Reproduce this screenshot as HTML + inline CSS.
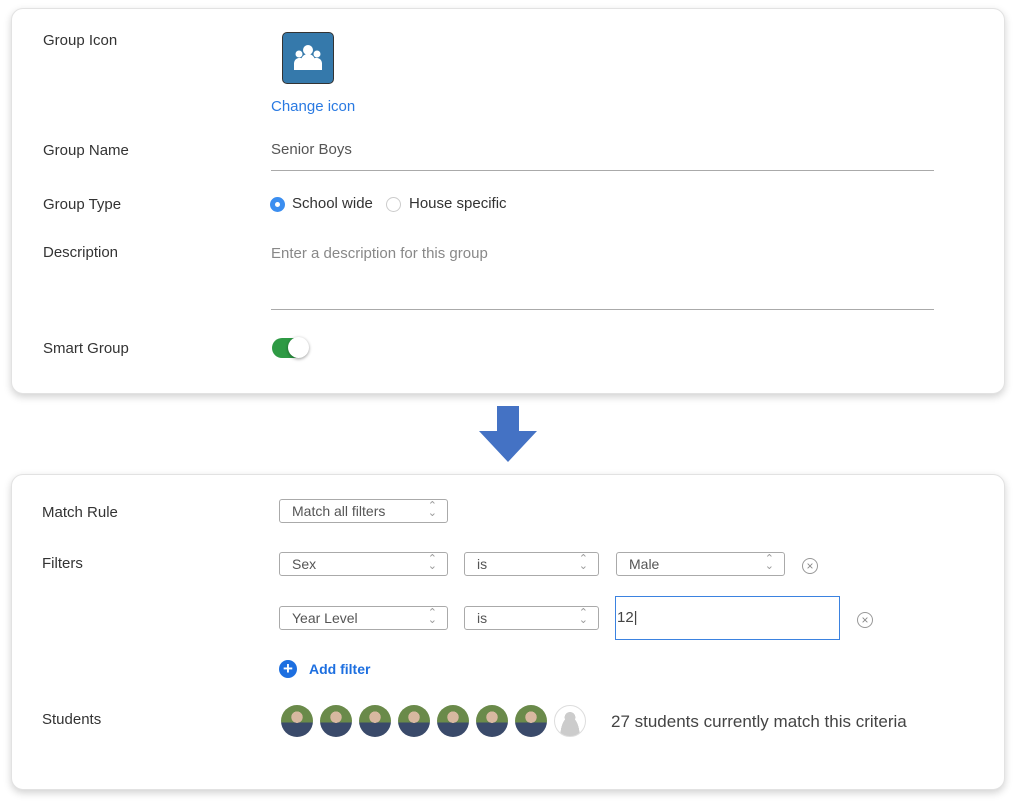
<!DOCTYPE html>
<html><head><style>
body{margin:0;width:1024px;height:812px;background:#fff;font-family:"Liberation Sans",sans-serif;position:relative;overflow:hidden;color:#333}
.card{position:absolute;left:11px;width:992px;background:#fff;border:1px solid #e2e2e2;border-radius:12px;box-shadow:0 3px 8px rgba(0,0,0,.18)}
.a{position:absolute;white-space:nowrap}
.lbl{font-size:15px;color:#333}
.sel{position:absolute;height:24px;border:1px solid #aaa;border-radius:3px;font-size:14px;color:#555;box-sizing:border-box;padding:3px 12px;background:#fff}
.sel:after{content:"⌃";position:absolute;right:10px;top:0;font-size:11px;color:#999;line-height:12px}
.sel:before{content:"⌄";position:absolute;right:10px;top:7px;font-size:11px;color:#999;line-height:12px}
.x{position:absolute;width:14px;height:14px;border:1.5px solid #999;border-radius:50%;font-size:12px;line-height:14px;text-align:center;color:#888}
.av{position:absolute;top:705px;width:32px;height:32px;border-radius:50%;background:radial-gradient(circle at 50% 38%,#d8b8a0 0 22%,transparent 23%),linear-gradient(#6a8a4a 0 55%,#3a4a6a 55%)}
</style></head><body>
<div class="card" style="top:8px;height:384px"></div>
<div class="card" style="top:474px;height:314px"></div>

<div class="a lbl" style="left:43px;top:32px">Group Icon</div>
<div class="a" style="left:282px;top:32px;width:52px;height:52px;background:#3579ab;border:1px solid #333;border-radius:5px;box-sizing:border-box">
<svg width="52" height="52" viewBox="0 0 52 52" style="position:absolute;left:-1px;top:-1px"><g fill="#fff"><circle cx="26" cy="18" r="5"/><circle cx="17" cy="22" r="3.5"/><circle cx="35" cy="22" r="3.5"/><path d="M19 38v-9a7 7 0 0 1 14 0v9z"/><path d="M12 38v-7a5.5 5.5 0 0 1 8-4.5v11.5z"/><path d="M40 38v-7a5.5 5.5 0 0 0-8-4.5v11.5z"/></g></svg></div>
<div class="a" style="left:271px;top:98px;font-size:15px;color:#2a7ae2">Change icon</div>

<div class="a lbl" style="left:43px;top:142px">Group Name</div>
<div class="a" style="left:271px;top:141px;font-size:15px;color:#555">Senior Boys</div>
<div class="a" style="left:271px;top:170px;width:663px;height:1px;background:#aaa"></div>

<div class="a lbl" style="left:43px;top:196px">Group Type</div>
<div class="a" style="left:270px;top:197px;width:15px;height:15px;border-radius:50%;background:#3b8ef0"><div style="margin:5px;width:5px;height:5px;border-radius:50%;background:#fff"></div></div>
<div class="a" style="left:292px;top:195px;font-size:15px;color:#333">School wide</div>
<div class="a" style="left:386px;top:197px;width:13px;height:13px;border-radius:50%;border:1px solid #ccc"></div>
<div class="a" style="left:409px;top:195px;font-size:15px;color:#333">House specific</div>

<div class="a lbl" style="left:43px;top:244px">Description</div>
<div class="a" style="left:271px;top:245px;font-size:15px;color:#888">Enter a description for this group</div>
<div class="a" style="left:271px;top:309px;width:663px;height:1px;background:#aaa"></div>

<div class="a lbl" style="left:43px;top:340px">Smart Group</div>
<div class="a" style="left:272px;top:338px;width:36px;height:20px;border-radius:10px;background:#2e9a44"></div>
<div class="a" style="left:288px;top:337px;width:21px;height:21px;border-radius:50%;background:#fff;box-shadow:0 1px 3px rgba(0,0,0,.4)"></div>

<svg class="a" style="left:478px;top:405px" width="60" height="60"><path d="M19 1h22v25h18L30 57 1 26h18z" fill="#4472c4"/></svg>

<div class="a lbl" style="left:42px;top:504px">Match Rule</div>
<div class="sel" style="left:279px;top:499px;width:169px">Match all filters</div>
<div class="a lbl" style="left:42px;top:555px">Filters</div>
<div class="sel" style="left:279px;top:552px;width:169px">Sex</div>
<div class="sel" style="left:464px;top:552px;width:135px">is</div>
<div class="sel" style="left:616px;top:552px;width:169px">Male</div>
<div class="x" style="left:802px;top:558px">×</div>
<div class="sel" style="left:279px;top:606px;width:169px">Year Level</div>
<div class="sel" style="left:464px;top:606px;width:135px">is</div>
<div class="a" style="left:615px;top:596px;width:225px;height:44px;border:1.5px solid #3b82e0;box-sizing:border-box;font-size:15px;color:#444;padding:12px 0 0 1px">12|</div>
<div class="x" style="left:857px;top:612px">×</div>
<div class="a" style="left:279px;top:660px;width:18px;height:18px;border-radius:50%;background:#1d6fe0;color:#fff;font-size:17px;line-height:17px;text-align:center;font-weight:bold">+</div>
<div class="a" style="left:309px;top:661px;font-size:14px;color:#1d6fe0;font-weight:bold">Add filter</div>

<div class="a lbl" style="left:42px;top:711px">Students</div>
<div class="av" style="left:281px"></div><div class="av" style="left:320px"></div><div class="av" style="left:359px"></div><div class="av" style="left:398px"></div><div class="av" style="left:437px"></div><div class="av" style="left:476px"></div><div class="av" style="left:515px"></div>
<div class="a" style="left:554px;top:705px;width:32px;height:32px;border-radius:50%;border:1px solid #ddd;box-sizing:border-box;background:radial-gradient(circle at 50% 38%,#ccc 0 22%,transparent 23%),radial-gradient(ellipse at 50% 100%,#ccc 0 45%,#fff 46%)"></div>
<div class="a" style="left:611px;top:712px;font-size:17px;color:#444">27 students currently match this criteria</div>
</body></html>
